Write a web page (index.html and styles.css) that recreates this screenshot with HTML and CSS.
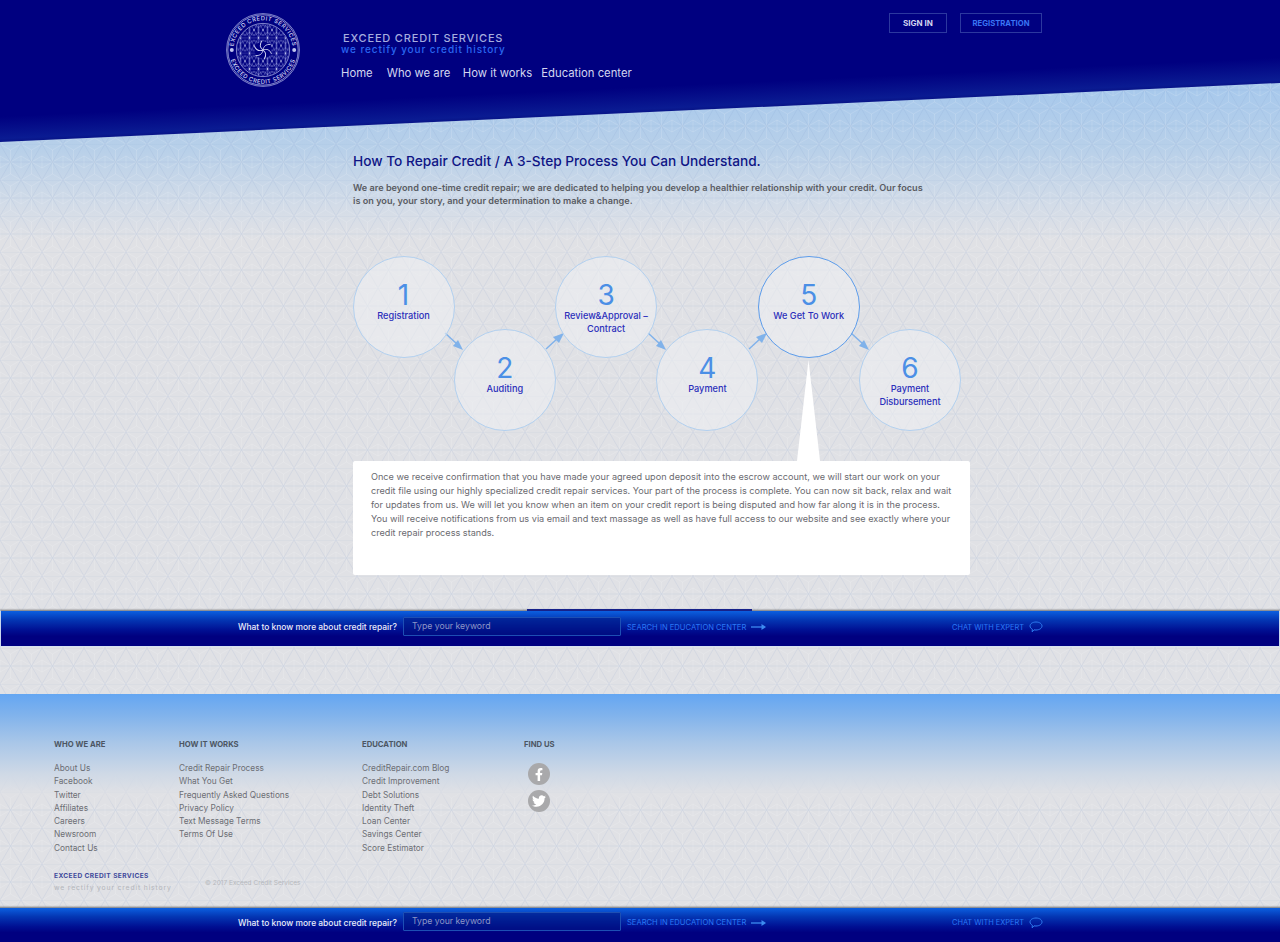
FILE: index.html
```html
<!DOCTYPE html>
<html lang="en">
<head>
<meta charset="utf-8">
<title>Exceed Credit Services</title>
<link rel="stylesheet" href="styles.css">
</head>
<body>
<header class="site-header">
  <svg class="logo" viewBox="0 0 74 74" aria-label="Exceed Credit Services logo">
    <defs>
      <pattern id="flower" width="9" height="15.590" patternUnits="userSpaceOnUse" x="1" y="1.400">
        <path d="M0 0L9 15.590M9 0L0 15.590M0 7.795H9M4.500 0V15.590" fill="none" stroke="#8f97df" stroke-width=".4"/>
        <g fill="none" stroke="#aab0ea" stroke-width=".35">
          <circle cx="0" cy="0" r="5.200"/><circle cx="9" cy="0" r="5.200"/><circle cx="4.500" cy="7.795" r="5.200"/><circle cx="0" cy="15.590" r="5.200"/><circle cx="9" cy="15.590" r="5.200"/>
        </g>
        <g fill="#e0e3fa">
          <circle cx="4.500" cy="7.795" r=".8"/><circle cx="0" cy="0" r=".8"/><circle cx="9" cy="0" r=".8"/><circle cx="0" cy="15.590" r=".8"/><circle cx="9" cy="15.590" r=".8"/>
        </g>
      </pattern>
      <path id="blade" d="M37 37C37.500 33.500 40 31 44.500 31.500"/>
      <path id="arc-top" d="M7.300 37A29.700 29.700 0 0 1 66.700 37"/>
      <path id="arc-bottom" d="M3.300 37A33.700 33.700 0 0 0 70.700 37"/>
    </defs>
    <circle class="logo-ring" cx="37" cy="37" r="36.400"/>
    <circle class="logo-ring" cx="37" cy="37" r="35.200"/>
    <circle class="logo-ring" cx="37" cy="37" r="26.600"/>
    <circle cx="37" cy="37" r="26" fill="url(#flower)"/>
    <circle cx="37" cy="37" r="8.500" fill="#000080"/>
    <g class="logo-swirl">
      <use href="#blade"/>
      <use href="#blade" transform="rotate(60 37 37)"/>
      <use href="#blade" transform="rotate(120 37 37)"/>
      <use href="#blade" transform="rotate(180 37 37)"/>
      <use href="#blade" transform="rotate(240 37 37)"/>
      <use href="#blade" transform="rotate(300 37 37)"/>
    </g>
    <circle class="logo-dot" cx="5.800" cy="37" r="2"/>
    <circle class="logo-dot" cx="68.200" cy="37" r="2"/>
    <text class="logo-text"><textPath href="#arc-top" startOffset="50%" text-anchor="middle">EXCEED CREDIT SERVICES</textPath></text>
    <text class="logo-text"><textPath href="#arc-bottom" startOffset="50%" text-anchor="middle">EXCEED CREDIT SERVICES</textPath></text>
  </svg>
  <div class="brand-block">
    <div class="brand-name">EXCEED CREDIT SERVICES</div>
    <div class="brand-tag">we rectify your credit history</div>
    <nav class="main-nav">
      <a href="#">Home</a>
      <a href="#">Who we are</a>
      <a href="#">How it works</a>
      <a href="#">Education center</a>
    </nav>
  </div>
  <div class="auth">
    <a class="auth-btn sign" href="#">SIGN IN</a>
    <a class="auth-btn reg" href="#">REGISTRATION</a>
  </div>
</header>

<main class="content">
  <h1>How To Repair Credit / A 3-Step Process You Can Understand.</h1>
  <p class="lead">We are beyond one-time credit repair; we are dedicated to helping you develop a healthier relationship with your credit. Our focus<br>is on you, your story, and your determination to make a change.</p>

  <div class="steps">
    <svg class="arrows" viewBox="0 0 620 210" aria-hidden="true">
      <g class="arrow"><path d="M92 77L104 88"/><polygon points="110,94 100,90 105,84"/></g>
      <g class="arrow"><path d="M193 93L205 82"/><polygon points="211,77 206,87 200,81"/></g>
      <g class="arrow"><path d="M295 77L307 88"/><polygon points="313,94 303,90 308,84"/></g>
      <g class="arrow"><path d="M396 93L408 82"/><polygon points="414,77 409,87 403,81"/></g>
      <g class="arrow"><path d="M498 77L510 88"/><polygon points="516,94 506,90 511,84"/></g>
      <polygon class="pointer" points="455.500,104 444,205 467,205"/>
    </svg>
    <div class="step"><span class="num">1</span><span class="label">Registration</span></div>
    <div class="step low"><span class="num">2</span><span class="label">Auditing</span></div>
    <div class="step"><span class="num">3</span><span class="label">Review&amp;Approval –<br>Contract</span></div>
    <div class="step low"><span class="num">4</span><span class="label">Payment</span></div>
    <div class="step active"><span class="num">5</span><span class="label">We Get To Work</span></div>
    <div class="step low"><span class="num">6</span><span class="label">Payment<br>Disbursement</span></div>
  </div>

  <div class="detail">Once we receive confirmation that you have made your agreed upon deposit into the escrow account, we will start our work on your<br>credit file using our highly specialized credit repair services. Your part of the process is complete. You can now sit back, relax and wait<br>for updates from us. We will let you know when an item on your credit report is being disputed and how far along it is in the process.<br>You will receive notifications from us via email and text massage as well as have full access to our website and see exactly where your<br>credit repair process stands.</div>
</main>

<section class="search-bar inline-bar">
  <span class="tab"></span>
  <span class="ask">What to know more about credit repair?</span>
  <span class="field">Type your keyword</span>
  <a class="search-link" href="#">SEARCH IN EDUCATION CENTER</a>
  <svg class="go" viewBox="0 0 15 8" aria-hidden="true"><path d="M0 4H13"/><polygon points="15,4 10.500,1 10.500,7"/></svg>
  <a class="chat-link" href="#">CHAT WITH EXPERT</a>
  <svg class="bubble" viewBox="0 0 14 12" aria-hidden="true"><path d="M7 1C10.500 1 13 2.800 13 5S10.500 9 7 9C6.300 9 5.700 9 5 8.800L3.200 10.800L3.300 8.200C2 7.500 1 6.400 1 5C1 2.800 3.500 1 7 1Z"/></svg>
</section>

<footer class="site-footer">
  <div class="columns">
    <div class="col c1">
      <h2>WHO WE ARE</h2>
      <a href="#">About Us</a><a href="#">Facebook</a><a href="#">Twitter</a><a href="#">Affiliates</a><a href="#">Careers</a><a href="#">Newsroom</a><a href="#">Contact Us</a>
    </div>
    <div class="col c2">
      <h2>HOW IT WORKS</h2>
      <a href="#">Credit Repair Process</a><a href="#">What You Get</a><a href="#">Frequently Asked Questions</a><a href="#">Privacy Policy</a><a href="#">Text Message Terms</a><a href="#">Terms Of Use</a>
    </div>
    <div class="col c3">
      <h2>EDUCATION</h2>
      <a href="#">CreditRepair.com Blog</a><a href="#">Credit Improvement</a><a href="#">Debt Solutions</a><a href="#">Identity Theft</a><a href="#">Loan Center</a><a href="#">Savings Center</a><a href="#">Score Estimator</a>
    </div>
    <div class="col c4">
      <h2>FIND US</h2>
      <div class="social">
        <span class="soc"><svg viewBox="0 0 320 512" width="8" height="13" aria-label="Facebook"><path d="M279.14 288l14.22-92.66h-88.91v-60.13c0-25.35 12.42-50.06 52.24-50.06h40.42V6.26S260.43 0 225.36 0c-73.22 0-121.08 44.38-121.08 124.72v70.62H22.89V288h81.39v224h100.17V288z"/></svg></span>
        <span class="soc"><svg viewBox="0 0 512 512" width="14" height="14" aria-label="Twitter"><path d="M459.37 151.716c.325 4.548.325 9.097.325 13.645 0 138.72-105.583 298.558-298.558 298.558-59.452 0-114.68-17.219-161.137-47.106 8.447.974 16.568 1.299 25.34 1.299 49.055 0 94.213-16.568 130.274-44.832-46.132-.975-84.792-31.188-98.112-72.772 6.498.974 12.995 1.624 19.818 1.624 9.421 0 18.843-1.3 27.614-3.573-48.081-9.747-84.143-51.98-84.143-102.985v-1.299c13.969 7.797 30.214 12.67 47.431 13.319-28.264-18.843-46.781-51.005-46.781-87.391 0-19.492 5.197-37.36 14.294-52.954 51.655 63.675 129.3 105.258 216.365 109.807-1.624-7.797-2.599-15.918-2.599-24.04 0-57.828 46.782-104.934 104.934-104.934 30.213 0 57.502 12.67 76.67 33.137 23.715-4.548 46.456-13.32 66.599-25.34-7.798 24.366-24.366 44.833-46.132 57.827 21.117-2.273 41.584-8.122 60.426-16.243-14.292 20.791-32.161 39.308-52.628 54.253z"/></svg></span>
      </div>
    </div>
  </div>
  <div class="foot-brand">
    <div class="fb-names">
      <div class="fb-name">EXCEED CREDIT SERVICES</div>
      <div class="fb-tag">we rectify your credit history</div>
    </div>
    <div class="copy">© 2017 Exceed Credit Services</div>
  </div>
</footer>

<section class="search-bar fixed-bar">
  <span class="ask">What to know more about credit repair?</span>
  <span class="field">Type your keyword</span>
  <a class="search-link" href="#">SEARCH IN EDUCATION CENTER</a>
  <svg class="go" viewBox="0 0 15 8" aria-hidden="true"><path d="M0 4H13"/><polygon points="15,4 10.500,1 10.500,7"/></svg>
  <a class="chat-link" href="#">CHAT WITH EXPERT</a>
  <svg class="bubble" viewBox="0 0 14 12" aria-hidden="true"><path d="M7 1C10.500 1 13 2.800 13 5S10.500 9 7 9C6.300 9 5.700 9 5 8.800L3.200 10.800L3.300 8.200C2 7.500 1 6.400 1 5C1 2.800 3.500 1 7 1Z"/></svg>
</section>
</body>
</html>
```
FILE: styles.css
```css
* { box-sizing: border-box; }
html, body { margin: 0; padding: 0; }
body {
  height: 942px;
  overflow: hidden;
  position: relative;
  font-family: Inter, "Open Sans", sans-serif;
  color: #555;
  background-color: #e0e1e5;
  background-image:
    url("data:image/svg+xml,%3Csvg xmlns='http://www.w3.org/2000/svg' width='21' height='36'%3E%3Cpath d='M10.500 6L0 0M10.500 6L21 0M10.500 6V18M0 12L10.500 18M21 12L10.500 18M0 24L10.500 18M21 24L10.500 18M10.500 30V18M10.500 30L0 36M10.500 30L21 36M0 12V24M21 12V24' fill='none' stroke='%23ffffff' stroke-opacity='.22' stroke-width='.6'/%3E%3Cpath d='M0 0L21 36M21 0L0 36M0 0H21M0 18H21' fill='none' stroke='%23708cc0' stroke-opacity='.16' stroke-width='.7'/%3E%3C/svg%3E"),
    linear-gradient(180deg, #a3c6ec 0, #a8c9ec 90px, #b8d0e9 150px, #d3dce8 205px, #e0e1e5 240px);
  background-repeat: repeat, no-repeat;
}
a { color: inherit; text-decoration: none; }

/* header */
.site-header {
  height: 142px;
  display: flex;
  align-items: flex-start;
  padding-top: 13px;
  padding-left: 226px;
  padding-right: 238px;
  background: linear-gradient(177.36deg, #000080 0, #000080 58%, #0a1b92 69%, #081488 70.600%);
  clip-path: polygon(0 0, 100% 0, 100% 83px, 0 142px);
}
.logo { width: 74px; height: 74px; flex: none; margin-right: 41px; }
.logo-ring { fill: none; stroke: #b8bdec; stroke-width: .7; }
.logo-swirl { fill: none; stroke: #d5d8f5; stroke-width: .9; }
.logo-dot { fill: #c0c5ee; }
.logo-text { fill: #d5d8f5; font-size: 5.800px; font-weight: 500; letter-spacing: .5px; font-family: Inter, sans-serif; }
.brand-block { padding-top: 20px; }
.brand-name { font-size: 11px; line-height: 11px; font-weight: 500; color: #a6addf; letter-spacing: .82px; padding-left: 2px; }
.brand-tag { font-size: 10px; line-height: 10px; font-weight: 500; color: #2a66f0; letter-spacing: .91px; }
.main-nav { display: grid; grid-template-columns: 45.800px 76px 78.500px auto; margin-top: 11px; font-size: 11.300px; line-height: 16px; color: #d3d6f0; white-space: nowrap; }
.auth { margin-left: auto; display: flex; gap: 13px; }
.auth-btn { height: 20px; line-height: 19px; border: 1px solid #2c389f; font-weight: 700; text-align: center; }
.auth-btn.sign { width: 58px; font-size: 8px; color: #d3d6f0; }
.auth-btn.reg { width: 82px; font-size: 7.700px; color: #3a76f5; }

/* content */
.content { padding-left: 353px; padding-top: 10px; }
h1 { margin: 0; font-size: 13.700px; line-height: 18px; font-weight: 500; color: #0f1585; }
.lead { margin: 11px 0 0; font-size: 9.140px; line-height: 13px; font-weight: 600; color: #5a5c63; }

.steps {
  position: relative;
  width: 620px;
  height: 174px;
  margin-top: 49px;
  display: grid;
  grid-template-columns: repeat(6, 101.300px);
  align-items: start;
}
.arrows { position: absolute; left: 0; top: 0; width: 620px; height: 210px; }
.arrow path { fill: none; stroke: #80b2ea; stroke-width: 1.500; }
.arrow polygon { fill: #80b2ea; }
.pointer { fill: #fff; }
.step {
  position: relative;
  left: -.5px;
  width: 102px;
  height: 102px;
  border-radius: 50%;
  border: 1px solid #b2d0ef;
  background: rgba(236, 238, 242, .6);
  display: flex;
  flex-direction: column;
  align-items: center;
  padding-top: 23px;
  text-align: center;
}
.step.low { margin-top: 73px; }
.step.active { border-color: #5c9ceb; }
.num { font-size: 28px; line-height: 31px; font-weight: 400; color: #4b8fe6; margin-bottom: -2px; }
.label { font-size: 9.200px; line-height: 13.300px; font-weight: 500; color: #2b2fbb; white-space: nowrap; }

.detail {
  position: relative;
  width: 617px;
  height: 114px;
  margin-top: 31px;
  padding: 9px 18px;
  background: #fff;
  border-radius: 2px;
  font-size: 9.140px;
  line-height: 14px;
  color: #6a6a6f;
}

/* bars */
.search-bar {
  height: 37px;
  position: relative;
  display: flex;
  align-items: center;
  padding-left: 238px;
  padding-bottom: 3px;
  background: linear-gradient(180deg, #0c5fe0 0, #0437b4 25%, #000f92 55%, #000080 72%, #000080 100%);
  border-top: 1px solid #8d9097;
  box-shadow: 0 -1px 1px rgba(120, 120, 120, .35);
}
.inline-bar { margin-top: 35px; border-left: 1px solid #c9d8ee; border-right: 1px solid #c9d8ee; border-bottom: 1px solid #d6e2f2; padding-left: 237px; }
.fixed-bar { position: absolute; left: 0; right: 0; bottom: 0; height: 35px; padding-bottom: 5px; }
.tab { position: absolute; left: 526px; top: -2px; width: 225px; height: 1.500px; background: #16218a; }
.ask { font-size: 8.430px; font-weight: 500; color: #e9ecfb; white-space: nowrap; width: 165px; }
.field {
  width: 218px;
  height: 19px;
  margin-top: -2px;
  line-height: 16px;
  padding-left: 8px;
  border: 1px solid #1d4fb4;
  border-radius: 1px;
  background: rgba(0, 20, 130, .55);
  font-size: 8.700px;
  color: #8d96c7;
}
.search-link { margin-left: 6px; font-size: 7.600px; color: #2a78f5; white-space: nowrap; width: 119px; }
.go { width: 15px; height: 8px; margin-left: 5px; }
.go path { stroke: #3d8cf0; stroke-width: 1.300; fill: none; }
.go polygon { fill: #3d8cf0; }
.chat-link { margin-left: 186px; font-size: 7.400px; color: #2a78f5; white-space: nowrap; width: 72px; }
.bubble { width: 14px; height: 12px; margin-left: 5px; }
.bubble path { fill: none; stroke: #2f7cf0; stroke-width: 1; }

/* footer */
.site-footer {
  margin-top: 47px;
  height: 213px;
  padding-top: 44px;
  padding-left: 54px;
  background: linear-gradient(180deg, #64a6f2 0, #7fb2ec 20px, #a8c6e8 48px, #cfd9e6 80px, rgba(224, 225, 229, .6) 100px, rgba(224, 225, 229, 0) 112px);
}
.columns { display: flex; height: 117px; }
.col { display: flex; flex-direction: column; }
.c1 { width: 125px; }
.c2 { width: 183px; }
.c3 { width: 162px; }
.c4 { width: 60px; }
.col h2 { margin: 0 0 11px; font-size: 7.700px; line-height: 13px; font-weight: 700; color: #4c5663; }
.col a { font-size: 8.300px; line-height: 13.300px; color: #6c6e74; white-space: nowrap; }
.social { display: flex; flex-direction: column; gap: 5px; padding-left: 4px; margin-top: 1px; }
.soc { width: 22px; height: 22px; border-radius: 50%; background: #a9a9ab; display: flex; align-items: center; justify-content: center; }
.soc svg { fill: #fff; }
.foot-brand { display: flex; margin-top: 16px; }
.fb-names { width: 151px; }
.fb-name { font-size: 6.600px; line-height: 11px; font-weight: 700; letter-spacing: .4px; color: #3f4a9b; }
.fb-tag { font-size: 6.800px; line-height: 11px; letter-spacing: .85px; color: #b3b5ba; white-space: nowrap; }
.copy { font-size: 6.500px; line-height: 11px; color: #b6b8bc; margin-top: 7px; }
```
